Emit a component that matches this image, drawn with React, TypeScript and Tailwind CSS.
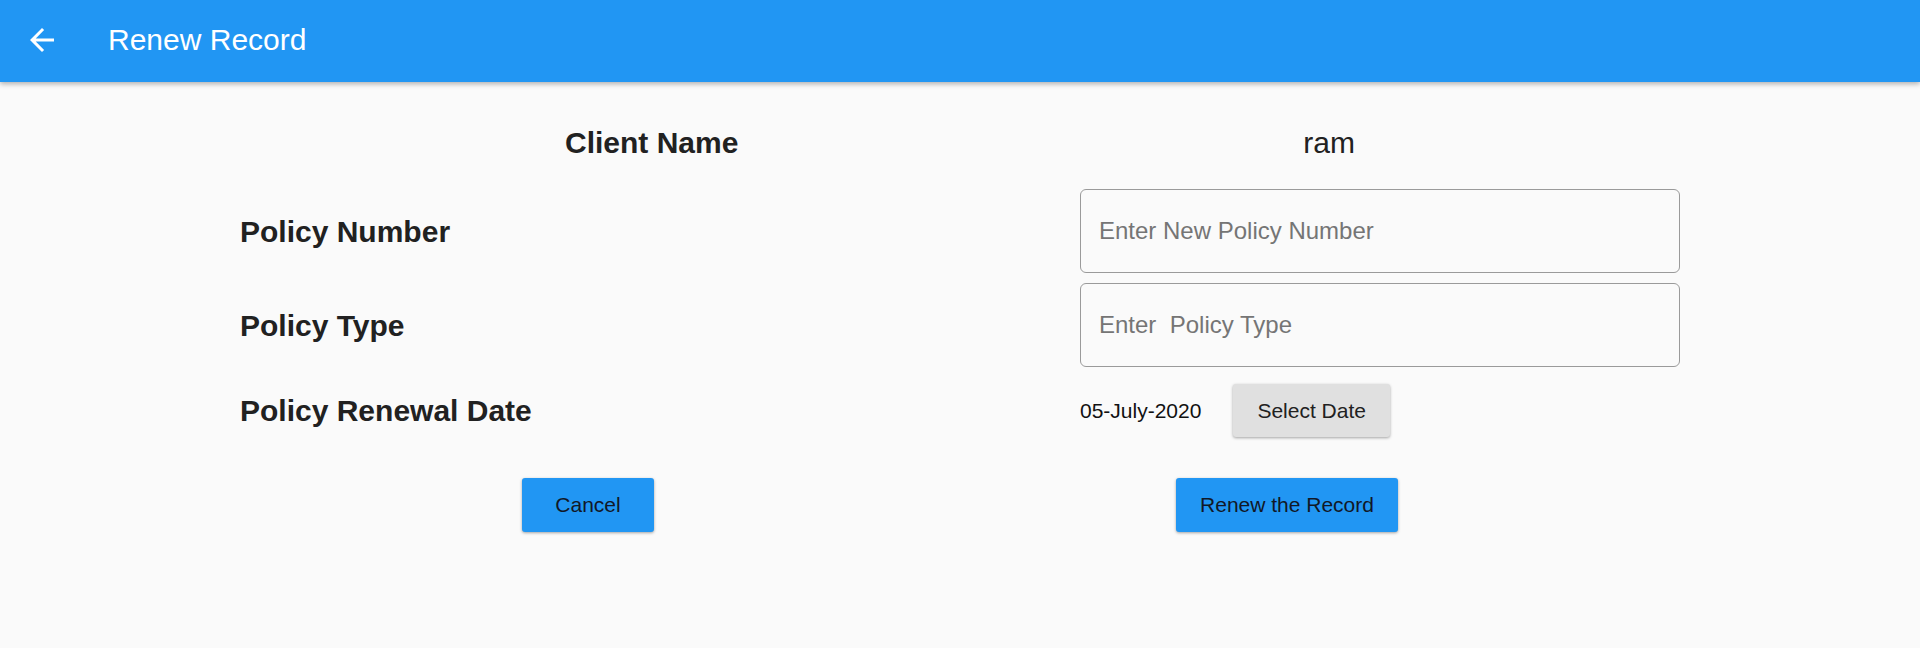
import React from "react"

const font = { fontFamily: '"Liberation Sans", Arial, sans-serif' }

function BackArrow() {
  return (
    <svg width="36" height="36" viewBox="0 0 24 24" fill="#ffffff" aria-hidden="true">
      <path d="M20 11H7.83l5.59-5.59L12 4l-8 8 8 8 1.41-1.41L7.83 13H20v-2z" />
    </svg>
  )
}

function FieldRow({ label, placeholder }: { label: string; placeholder: string }) {
  return (
    <div className="flex items-center justify-between px-[240px]">
      <span className="text-[30px] font-bold text-[#212121]">{label}</span>
      <input
        type="text"
        placeholder={placeholder}
        className="w-[600px] h-[84px] rounded-[6px] border border-[#9a9a9a] bg-transparent px-[18px] text-[24px] text-[#212121] placeholder:text-[#757575] outline-none"
        style={font}
      />
    </div>
  )
}

export default function App() {
  return (
    <div className="min-h-[648px] w-full bg-[#fafafa]" style={font}>
      {/* App bar */}
      <header className="relative z-10 flex h-[82px] items-center bg-[#2196f3] pb-[3px] pl-[24px] shadow-[0_2px_5px_rgba(0,0,0,0.3)]">
        <button className="flex h-[36px] w-[36px] items-center justify-center">
          <BackArrow />
        </button>
        <h1 className="ml-[48px] text-[30px] font-normal text-white">Renew Record</h1>
      </header>

      {/* Client name */}
      <div className="mt-[30px] flex h-[60px] items-center justify-evenly">
        <span className="text-[30px] font-bold text-[#212121]">Client Name</span>
        <span className="text-[30px] text-[#212121]">ram</span>
      </div>

      <div className="mt-[17px] flex flex-col gap-[10px]">
        <FieldRow label="Policy Number" placeholder="Enter New Policy Number" />
        <FieldRow label="Policy Type" placeholder={"Enter\u00a0 Policy Type"} />
      </div>

      {/* Renewal date */}
      <div className="mt-[17px] flex items-center justify-between px-[240px]">
        <span className="text-[30px] font-bold text-[#212121]">Policy Renewal Date</span>
        <div className="flex w-[600px] items-center gap-[32px]">
          <span className="text-[21px] text-[#111111]">05-July-2020</span>
          <button className="h-[53px] rounded-[3px] bg-[#e0e0e0] px-[24px] text-[21px] text-[#212121] shadow-[0_1px_3px_rgba(0,0,0,0.35)]">
            Select Date
          </button>
        </div>
      </div>

      {/* Actions */}
      <div className="mt-[41px] flex items-center justify-evenly">
        <button className="h-[54px] min-w-[132px] rounded-[3px] bg-[#2196f3] px-[24px] text-[21px] text-[#111827] shadow-[0_1px_3px_rgba(0,0,0,0.35)]">
          Cancel
        </button>
        <button className="h-[54px] min-w-[132px] rounded-[3px] bg-[#2196f3] px-[24px] text-[21px] text-[#111827] shadow-[0_1px_3px_rgba(0,0,0,0.35)]">
          Renew the Record
        </button>
      </div>
    </div>
  )
}
